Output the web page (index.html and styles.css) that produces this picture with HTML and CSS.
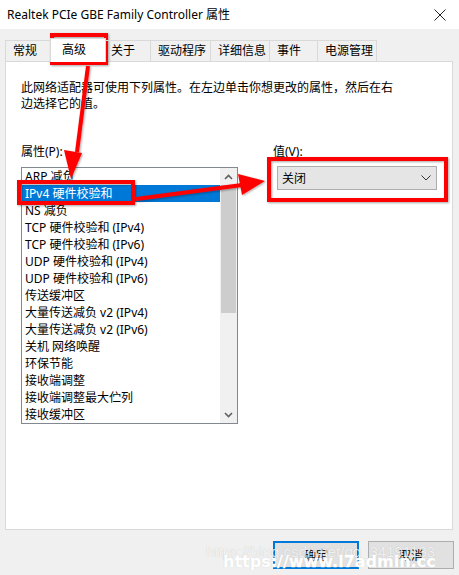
FILE: index.html
```html
<!DOCTYPE html>
<html>
<head>
    <link rel="stylesheet" href="styles.css">
</head>
<body>
    <div class="titlebar">
        <span class="title">Realtek PCIe GBE Family Controller 属性</span>
        <svg class="close" width="12" height="12" viewBox="0 0 12 12">
            <path d="M0.5 0.5L11.5 11.5M11.5 0.5L0.5 11.5" stroke="#222" stroke-width="1"></path>
        </svg>
    </div>

    <div class="tabs">
        <div class="tab first" style="width:47px">常规</div>
        <div class="tab active" style="width:56px">高级</div>
        <div class="tab" style="width:47px">关于</div>
        <div class="tab" style="width:60px">驱动程序</div>
        <div class="tab" style="width:59px">详细信息</div>
        <div class="tab" style="width:48px">事件</div>
        <div class="tab" style="width:59px">电源管理</div>
    </div>

    <div class="panel">
        <p class="desc">此网络适配器可使用下列属性。在左边单击你想更改的属性，然后在右<br>边选择它的值。</p>

        <div class="fields">
            <div class="col-left">
                <label>属性(P):</label>
                <div class="listbox">
                    <ul class="items">
                        <li>ARP 减负</li>
                        <li class="selected">IPv4 硬件校验和</li>
                        <li>NS 减负</li>
                        <li>TCP 硬件校验和 (IPv4)</li>
                        <li>TCP 硬件校验和 (IPv6)</li>
                        <li>UDP 硬件校验和 (IPv4)</li>
                        <li>UDP 硬件校验和 (IPv6)</li>
                        <li>传送缓冲区</li>
                        <li>大量传送减负 v2 (IPv4)</li>
                        <li>大量传送减负 v2 (IPv6)</li>
                        <li>关机 网络唤醒</li>
                        <li>环保节能</li>
                        <li>接收端调整</li>
                        <li>接收端调整最大伫列</li>
                        <li>接收缓冲区</li>
                    </ul>
                    <div class="scrollbar">
                        <div class="sb-arrow">
                            <svg width="9" height="6" viewBox="0 0 9 6"><path d="M1 5L4.5 1.5L8 5" fill="none" stroke="#606060" stroke-width="1.6"></path></svg>
                        </div>
                        <div class="sb-track"><div class="sb-thumb"></div></div>
                        <div class="sb-arrow">
                            <svg width="9" height="6" viewBox="0 0 9 6"><path d="M1 1L4.5 4.5L8 1" fill="none" stroke="#606060" stroke-width="1.6"></path></svg>
                        </div>
                    </div>
                </div>
            </div>

            <div class="col-right">
                <label>值(V):</label>
                <div class="combo">
                    <span>关闭</span>
                    <svg width="10" height="6" viewBox="0 0 10 6"><path d="M0.5 0.5L5 5L9.5 0.5" fill="none" stroke="#333" stroke-width="1"></path></svg>
                </div>
            </div>
        </div>
    </div>

    <div class="buttons">
        <button class="btn default">确定</button>
        <button class="btn">取消</button>
    </div>

    <!-- 标注层 -->
    <svg class="marks" width="459" height="575" viewBox="0 0 459 575">
        <defs>
            <filter id="shadow" x="-20%" y="-20%" width="140%" height="140%">
                <feDropShadow dx="1" dy="1" stdDeviation="1.2" flood-color="#000" flood-opacity="0.35"></feDropShadow>
            </filter>
        </defs>
        <g filter="url(#shadow)" stroke="#ff0000" fill="none" stroke-width="4">
            <rect x="52" y="35" width="54" height="28"></rect>
            <rect x="19" y="182" width="114" height="21"></rect>
            <rect x="269" y="159" width="177" height="41"></rect>
            <path d="M88 66L77 152"></path>
            <path d="M136 199L242 185"></path>
        </g>
        <g filter="url(#shadow)" fill="#ff0000">
            <polygon points="64,150 82,153 71,179"></polygon>
            <polygon points="238,174 242,195 265,181"></polygon>
        </g>
    </svg>

    <div class="wm-light">https://blog.csdn.net/qq_34191133</div>
    <div class="wm-bold">https://www.i7admin.cc</div>
</body>
</html>
```

FILE: styles.css
```css
* {
    box-sizing: border-box;
    margin: 0;
    padding: 0;
}

body {
    width: 459px;
    height: 575px;
    position: relative;
    overflow: hidden;
    background-color: #f0f0f0;
    color: #000;
    font-family: "Noto Sans", "Noto Sans CJK SC", sans-serif;
    font-size: 12px;
}

.titlebar {
    height: 29px;
    background-color: #ffffff;
    display: flex;
    align-items: center;
    justify-content: space-between;
    padding: 0 13px 0 7px;
}

.title {
    line-height: 16px;
}

.tabs {
    height: 23px;
    margin-top: 9px;
    padding-left: 5px;
    display: flex;
    align-items: flex-end;
    position: relative;
    z-index: 1;
}

.tab {
    height: 21px;
    line-height: 19px;
    padding-left: 7px;
    border: 1px solid #d9d9d9;
    border-left: none;
    border-bottom: none;
    white-space: nowrap;
}

.tab.first {
    border-left: 1px solid #d9d9d9;
}

.tab.active {
    height: 24px;
    margin: 0 -2px -1px -2px;
    padding-left: 11px;
    line-height: 22px;
    background-color: #ffffff;
    border-left: 1px solid #d9d9d9;
    position: relative;
    z-index: 2;
}

.panel {
    width: 448px;
    height: 469px;
    margin-left: 5px;
    background-color: #ffffff;
    border: 1px solid #d9d9d9;
    padding: 18px 15px 0 15px;
}

.desc {
    line-height: 16px;
}

.fields {
    margin-top: 32px;
    display: flex;
    gap: 35px;
}

label {
    display: block;
    line-height: 16px;
}

.col-left label {
    margin-bottom: 7px;
}

.col-right label {
    margin-bottom: 6px;
}

.listbox {
    width: 217px;
    height: 257px;
    border: 1px solid #828790;
    display: flex;
}

.items {
    list-style: none;
    width: 198px;
}

.items li {
    height: 17px;
    line-height: 17px;
    padding-left: 3px;
    white-space: nowrap;
}

.items li.selected {
    background-color: #0078d7;
    color: #ffffff;
}

.scrollbar {
    width: 17px;
    background-color: #f0f0f0;
    display: flex;
    flex-direction: column;
}

.sb-arrow {
    height: 17px;
    display: flex;
    align-items: center;
    justify-content: center;
}

.sb-track {
    flex: 1;
    padding: 0 1px;
}

.sb-thumb {
    height: 128px;
    background-color: #cdcdcd;
}

.combo {
    width: 160px;
    height: 24px;
    margin-left: 4px;
    background-color: #e5e5e5;
    border: 1px solid #adadad;
    display: flex;
    align-items: center;
    justify-content: space-between;
    padding: 0 5px 0 4px;
}

.buttons {
    margin-top: 11px;
    padding-right: 5px;
    display: flex;
    justify-content: flex-end;
    gap: 9px;
}

.btn {
    width: 86px;
    height: 28px;
    font-family: "Noto Sans", "Noto Sans CJK SC", sans-serif;
    font-size: 12px;
    background-color: #e1e1e1;
    border: 1px solid #adadad;
    color: #000;
}

.btn.default {
    border: 2px solid #0078d7;
}

.marks {
    position: absolute;
    top: 0;
    left: 0;
    pointer-events: none;
}

.wm-light {
    position: absolute;
    left: 206px;
    top: 543px;
    font-family: "Liberation Sans", sans-serif;
    font-size: 15px;
    color: rgba(255, 255, 255, 0.8);
    text-shadow: 0 0 1px rgba(0, 0, 0, 0.2);
    white-space: nowrap;
}

.wm-bold {
    position: absolute;
    left: 223px;
    top: 553px;
    font-family: "DejaVu Sans", sans-serif;
    font-weight: bold;
    font-size: 16px;
    line-height: 18px;
    color: #ffffff;
    -webkit-text-stroke: 0.5px #ffffff;
    text-shadow: 0 0 1px rgba(0, 0, 0, 0.35);
    white-space: nowrap;
}
```
